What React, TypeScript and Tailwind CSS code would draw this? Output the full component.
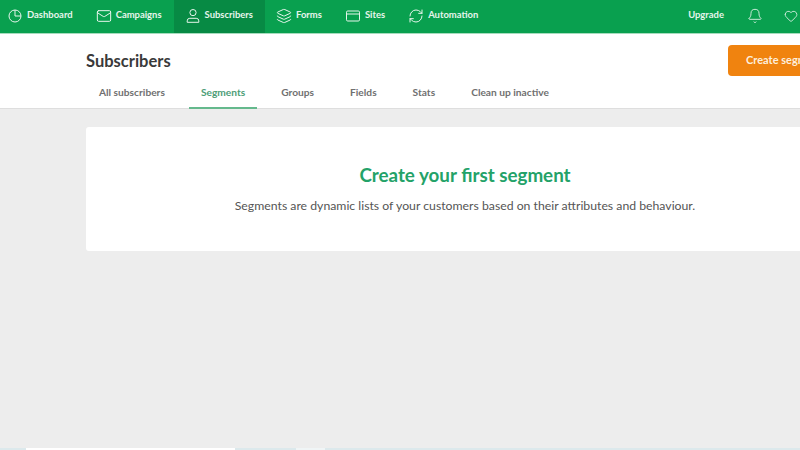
import { Bell, Heart, Layers, Mail, RefreshCw } from 'lucide-react'
import type { ReactNode } from 'react'

function PieIcon() {
  return (
    <svg width="16" height="16" viewBox="0 0 16 16" fill="none" stroke="currentColor" strokeWidth="1">
      <circle cx="8" cy="8" r="6" />
      <path d="M8 2v6h6" />
    </svg>
  )
}

function PersonIcon() {
  return (
    <svg width="16" height="16" viewBox="0 0 16 16" fill="none" stroke="currentColor" strokeWidth="1">
      <circle cx="8" cy="4.6" r="3.1" />
      <path d="M2.2 14.3v-1.4a2.6 2.6 0 0 1 2.6-2.6h6.4a2.6 2.6 0 0 1 2.6 2.6v1.4z" />
    </svg>
  )
}

function WindowIcon() {
  return (
    <svg width="16" height="16" viewBox="0 0 16 16" fill="none" stroke="currentColor" strokeWidth="1">
      <rect x="1.5" y="3" width="13" height="10" rx="1.2" />
      <path d="M1.5 6h13" />
    </svg>
  )
}

const navItems: { label: string; icon: ReactNode; active?: boolean }[] = [
  { label: 'Dashboard', icon: <PieIcon /> },
  { label: 'Campaigns', icon: <Mail size={16} strokeWidth={1.5} /> },
  { label: 'Subscribers', icon: <PersonIcon />, active: true },
  { label: 'Forms', icon: <Layers size={16} strokeWidth={1.5} /> },
  { label: 'Sites', icon: <WindowIcon /> },
  { label: 'Automation', icon: <RefreshCw size={16} strokeWidth={1.5} /> },
]

const tabs = ['All subscribers', 'Segments', 'Groups', 'Fields', 'Stats', 'Clean up inactive']

function TopNav() {
  return (
    <div className="flex h-[33px] shrink-0 items-stretch bg-[#09a04f] text-[9.45px] font-bold text-[#e6f5ec]">
      <div className="ml-[-4px] flex items-stretch">
        {navItems.map((item) => (
          <div
            key={item.label}
            className={`flex items-center gap-1 pr-3 pb-[2px] pl-[11px] ${item.active ? 'bg-[#078a44]' : ''}`}
          >
            {item.icon}
            <span>{item.label}</span>
          </div>
        ))}
      </div>
      <div className="ml-auto mr-[2px] flex items-center pb-[2px]">
        <span>Upgrade</span>
        <Bell size={16} strokeWidth={1.3} className="ml-[23px]" />
        <Heart size={14} strokeWidth={1.4} className="ml-[21px]" />
      </div>
    </div>
  )
}

function Header() {
  return (
    <div className="h-[75px] shrink-0 border-b border-[#dedede] bg-white pl-[86px]">
      <div className="flex h-[43px] items-start justify-between">
        <h1 className="mt-[17px] text-[16.5px] leading-5 font-bold text-[#3a3a3a]">Subscribers</h1>
        <button className="mt-[11px] mr-[-48px] h-[31px] w-[120px] shrink-0 rounded-l-[4px] bg-[#f0830f] pl-[18px] text-left text-[11px] font-bold text-[#fdeedd]">
          Create segment
        </button>
      </div>
      <div className="flex h-[32px] gap-3 pl-px">
        {tabs.map((tab) => (
          <div
            key={tab}
            className={`flex h-[32px] items-center border-b-2 px-3 pt-[2px] text-[10.2px] font-bold ${
              tab === 'Segments' ? 'border-[#65b98d] text-[#4d9d77]' : 'border-transparent text-[#707070]'
            }`}
          >
            {tab}
          </div>
        ))}
      </div>
    </div>
  )
}

export default function App() {
  return (
    <div className="flex h-[450px] w-[800px] flex-col overflow-hidden bg-[#ededed] font-['Lato',sans-serif]">
      <TopNav />
      <div className="h-px shrink-0 bg-[#a6dcbd]" />
      <Header />
      <div className="flex-1 pt-[18px] pl-[86px]">
        <div className="flex h-[124px] w-[758px] flex-col items-center rounded-[3px] bg-white pt-9">
          <h2 className="text-[18.8px] leading-6 font-bold text-[#23a268]">Create your first segment</h2>
          <p className="mt-[10px] text-[12.25px] leading-[18px] text-[#555555]">
            Segments are dynamic lists of your customers based on their attributes and behaviour.
          </p>
        </div>
      </div>
      <div className="flex h-[2px] shrink-0 bg-[#dce9ec]">
        <div className="ml-[26px] w-[209px] bg-white" />
        <div className="ml-[61px] w-[29px] bg-[#f0f5f6]" />
      </div>
    </div>
  )
}
